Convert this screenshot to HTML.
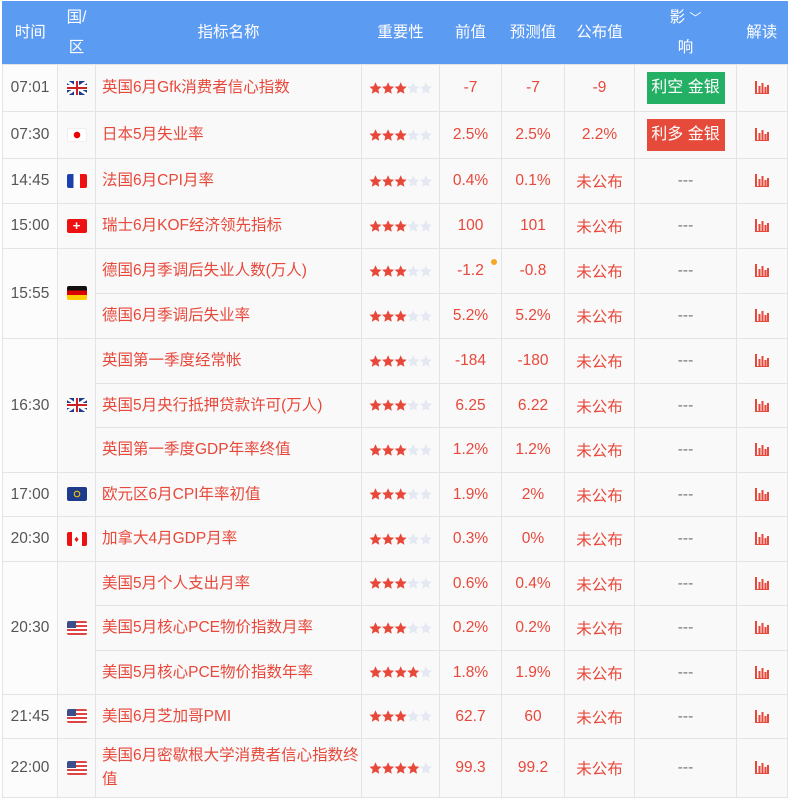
<!DOCTYPE html>
<html><head><meta charset="utf-8"><style>
*{margin:0;padding:0;box-sizing:border-box}
body{width:788px;height:799px;background:#fff;font-family:"Liberation Sans","Noto Sans CJK SC",sans-serif;overflow:hidden}
table{position:absolute;left:2px;top:1px;border-collapse:collapse;table-layout:fixed;width:785px;border:1px solid #5b9bf2}
th{background:#5b9bf2;color:#fff;font-weight:normal;font-size:15.5px;height:63px;line-height:30px;border:none}
td{border:1px solid #e2e4e8;background:#f9f9f9;color:#e8483a;font-size:15.5px;text-align:center;padding:0}
td.t{color:#555;background:#fcfcfc}
td.n{text-align:left;padding-left:6px;line-height:24px}
td.s{text-align:left;padding-left:7px;line-height:12px}
.st{display:inline-block;width:64px;height:13px;vertical-align:middle}
.b{display:inline-block;width:78px;height:32px;line-height:32px;color:#fff;font-size:16px}
.g{background:#23b064}.r{background:#e64a3b}
.d{color:#777}
.f{display:inline-block;width:20px;height:14px;border-radius:2px;vertical-align:middle;overflow:hidden}
.ic{display:inline-block;width:14px;height:13px;vertical-align:middle}
</style></head><body>
<svg width="0" height="0" style="position:absolute"><defs>
<path id="p" d="M6.5 0.3l1.8 4 4.2.4-3.2 2.9.9 4.2-3.7-2.2-3.7 2.2.9-4.2L0.5 4.7l4.2-.4z"/>
<symbol id="s3" viewBox="0 0 64 13"><g fill="#e8483a"><use href="#p"/><use href="#p" x="12.6"/><use href="#p" x="25.2"/></g><g fill="#e3e8f2"><use href="#p" x="37.8"/><use href="#p" x="50.4"/></g></symbol>
<symbol id="s4" viewBox="0 0 64 13"><g fill="#e8483a"><use href="#p"/><use href="#p" x="12.6"/><use href="#p" x="25.2"/><use href="#p" x="37.8"/></g><g fill="#e3e8f2"><use href="#p" x="50.4"/></g></symbol>
<symbol id="c" viewBox="0 0 14 13"><path d="M1 0v13h13M4.5 5v7M7.5 2v10M10.5 6v6M13 4v8" stroke="#e8483a" stroke-width="2" fill="none"/></symbol></defs></svg>
<table>
<colgroup><col style="width:55px"><col style="width:38px"><col style="width:266px"><col style="width:78px"><col style="width:62px"><col style="width:63px"><col style="width:70px"><col style="width:102px"><col style="width:51px"></colgroup>
<tr><th>时间</th><th>国/<br>区</th><th>指标名称</th><th>重要性</th><th>前值</th><th>预测值</th><th>公布值</th><th>影 <span style="font-size:12px">﹀</span><br>响</th><th>解读</th></tr>
<tr style="height:47px"><td class="t">07:01</td><td><span class="f" style="background:#1e3a8a;background-image:linear-gradient(#c22,#c22),linear-gradient(90deg,#c22,#c22),linear-gradient(#fff,#fff),linear-gradient(90deg,#fff,#fff),linear-gradient(33deg,transparent 44%,#fff 44%,#fff 56%,transparent 56%),linear-gradient(-33deg,transparent 44%,#fff 44%,#fff 56%,transparent 56%);background-size:100% 2px,2px 100%,100% 5px,5px 100%,100% 100%,100% 100%;background-position:0 6px,9px 0,0 4.5px,7.5px 0,0 0,0 0;background-repeat:no-repeat"></span></td><td class="n">英国6月Gfk消费者信心指数</td><td class="s"><svg class="st"><use href="#s3"/></svg></td><td>-7</td><td>-7</td><td>-9</td><td><span class="b g">利空 金银</span></td><td><svg class="ic"><use href="#c"/></svg></td></tr>
<tr style="height:47px"><td class="t">07:30</td><td><span class="f" style="background:radial-gradient(circle,#e00 3px,#fff 3.5px);border:1px solid #eee"></span></td><td class="n">日本5月失业率</td><td class="s"><svg class="st"><use href="#s3"/></svg></td><td>2.5%</td><td>2.5%</td><td>2.2%</td><td><span class="b r">利多 金银</span></td><td><svg class="ic"><use href="#c"/></svg></td></tr>
<tr style="height:45px"><td class="t">14:45</td><td><span class="f" style="background:linear-gradient(90deg,#1e40af 33%,#fff 33%,#fff 66%,#e11 66%)"></span></td><td class="n">法国6月CPI月率</td><td class="s"><svg class="st"><use href="#s3"/></svg></td><td>0.4%</td><td>0.1%</td><td>未公布</td><td class="d">---</td><td><svg class="ic"><use href="#c"/></svg></td></tr>
<tr style="height:45px"><td class="t">15:00</td><td><span class="f" style="background:#e11;color:#fff;font-size:13px;line-height:14px;font-weight:bold">+</span></td><td class="n">瑞士6月KOF经济领先指标</td><td class="s"><svg class="st"><use href="#s3"/></svg></td><td>100</td><td>101</td><td>未公布</td><td class="d">---</td><td><svg class="ic"><use href="#c"/></svg></td></tr>
<tr style="height:45px"><td class="t" rowspan="2">15:55</td><td rowspan="2"><span class="f" style="background:linear-gradient(#111 33%,#d00 33%,#d00 66%,#fc0 66%)"></span></td><td class="n">德国6月季调后失业人数(万人)</td><td class="s"><svg class="st"><use href="#s3"/></svg></td><td style="position:relative">-1.2<span style="position:absolute;right:4px;top:10px;width:6px;height:6px;border-radius:3px;background:#f5a623"></span></td><td>-0.8</td><td>未公布</td><td class="d">---</td><td><svg class="ic"><use href="#c"/></svg></td></tr>
<tr style="height:45px"><td class="n">德国6月季调后失业率</td><td class="s"><svg class="st"><use href="#s3"/></svg></td><td>5.2%</td><td>5.2%</td><td>未公布</td><td class="d">---</td><td><svg class="ic"><use href="#c"/></svg></td></tr>
<tr style="height:45px"><td class="t" rowspan="3">16:30</td><td rowspan="3"><span class="f" style="background:#1e3a8a;background-image:linear-gradient(#c22,#c22),linear-gradient(90deg,#c22,#c22),linear-gradient(#fff,#fff),linear-gradient(90deg,#fff,#fff),linear-gradient(33deg,transparent 44%,#fff 44%,#fff 56%,transparent 56%),linear-gradient(-33deg,transparent 44%,#fff 44%,#fff 56%,transparent 56%);background-size:100% 2px,2px 100%,100% 5px,5px 100%,100% 100%,100% 100%;background-position:0 6px,9px 0,0 4.5px,7.5px 0,0 0,0 0;background-repeat:no-repeat"></span></td><td class="n">英国第一季度经常帐</td><td class="s"><svg class="st"><use href="#s3"/></svg></td><td>-184</td><td>-180</td><td>未公布</td><td class="d">---</td><td><svg class="ic"><use href="#c"/></svg></td></tr>
<tr style="height:44px"><td class="n">英国5月央行抵押贷款许可(万人)</td><td class="s"><svg class="st"><use href="#s3"/></svg></td><td>6.25</td><td>6.22</td><td>未公布</td><td class="d">---</td><td><svg class="ic"><use href="#c"/></svg></td></tr>
<tr style="height:45px"><td class="n">英国第一季度GDP年率终值</td><td class="s"><svg class="st"><use href="#s3"/></svg></td><td>1.2%</td><td>1.2%</td><td>未公布</td><td class="d">---</td><td><svg class="ic"><use href="#c"/></svg></td></tr>
<tr style="height:44px"><td class="t">17:00</td><td><span class="f" style="background:radial-gradient(circle,#1e3a8a 2px,#fc0 2.5px,#fc0 3px,#1e3a8a 3.5px)"></span></td><td class="n">欧元区6月CPI年率初值</td><td class="s"><svg class="st"><use href="#s3"/></svg></td><td>1.9%</td><td>2%</td><td>未公布</td><td class="d">---</td><td><svg class="ic"><use href="#c"/></svg></td></tr>
<tr style="height:45px"><td class="t">20:30</td><td><span class="f" style="background:linear-gradient(90deg,#e11 25%,#fff 25%,#fff 75%,#e11 75%);color:#e11;font-size:9px;line-height:14px">♦</span></td><td class="n">加拿大4月GDP月率</td><td class="s"><svg class="st"><use href="#s3"/></svg></td><td>0.3%</td><td>0%</td><td>未公布</td><td class="d">---</td><td><svg class="ic"><use href="#c"/></svg></td></tr>
<tr style="height:44px"><td class="t" rowspan="3">20:30</td><td rowspan="3"><span class="f" style="background:linear-gradient(#3c4f8a,#3c4f8a) 0 0/9px 7px no-repeat,repeating-linear-gradient(#d44 0 2px,#fff 2px 4px)"></span></td><td class="n">美国5月个人支出月率</td><td class="s"><svg class="st"><use href="#s3"/></svg></td><td>0.6%</td><td>0.4%</td><td>未公布</td><td class="d">---</td><td><svg class="ic"><use href="#c"/></svg></td></tr>
<tr style="height:45px"><td class="n">美国5月核心PCE物价指数月率</td><td class="s"><svg class="st"><use href="#s3"/></svg></td><td>0.2%</td><td>0.2%</td><td>未公布</td><td class="d">---</td><td><svg class="ic"><use href="#c"/></svg></td></tr>
<tr style="height:44px"><td class="n">美国5月核心PCE物价指数年率</td><td class="s"><svg class="st"><use href="#s4"/></svg></td><td>1.8%</td><td>1.9%</td><td>未公布</td><td class="d">---</td><td><svg class="ic"><use href="#c"/></svg></td></tr>
<tr style="height:44px"><td class="t">21:45</td><td><span class="f" style="background:linear-gradient(#3c4f8a,#3c4f8a) 0 0/9px 7px no-repeat,repeating-linear-gradient(#d44 0 2px,#fff 2px 4px)"></span></td><td class="n">美国6月芝加哥PMI</td><td class="s"><svg class="st"><use href="#s3"/></svg></td><td>62.7</td><td>60</td><td>未公布</td><td class="d">---</td><td><svg class="ic"><use href="#c"/></svg></td></tr>
<tr style="height:59px"><td class="t">22:00</td><td><span class="f" style="background:linear-gradient(#3c4f8a,#3c4f8a) 0 0/9px 7px no-repeat,repeating-linear-gradient(#d44 0 2px,#fff 2px 4px)"></span></td><td class="n">美国6月密歇根大学消费者信心指数终值</td><td class="s"><svg class="st"><use href="#s4"/></svg></td><td>99.3</td><td>99.2</td><td>未公布</td><td class="d">---</td><td><svg class="ic"><use href="#c"/></svg></td></tr>
</table>
</body></html>
